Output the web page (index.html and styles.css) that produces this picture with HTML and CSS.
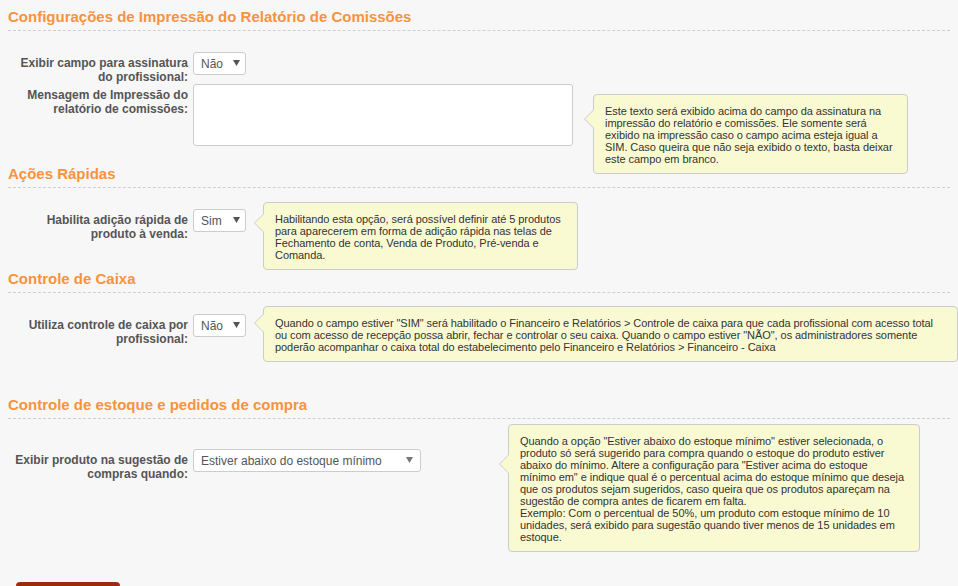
FILE: index.html
```html
<!DOCTYPE html>
<html lang="pt-BR">
<head>
<meta charset="utf-8">
<title>Configurações</title>
<link rel="stylesheet" href="styles.css">
</head>
<body>
<div class="page">

  <h2 class="section-title">Configurações de Impressão do Relatório de Comissões</h2>
  <div class="form-row">
    <label class="form-label">Exibir campo para assinatura do profissional:</label>
    <span class="select-wrap select-wrap--sm">
      <select class="select"><option>Não</option><option>Sim</option></select>
      <svg class="caret" width="7" height="6" viewBox="0 0 7 6"><path d="M0 0H7L3.5 6Z"/></svg>
    </span>
  </div>
  <div class="form-row">
    <label class="form-label">Mensagem de Impressão do relatório de comissões:</label>
    <textarea class="textarea"></textarea>
    <div class="hint hint--print">Este texto será exibido acima do campo da assinatura na impressão do relatório e comissões. Ele somente será exibido na impressão caso o campo acima esteja igual a SIM. Caso queira que não seja exibido o texto, basta deixar este campo em branco.</div>
  </div>

  <h2 class="section-title section-title--after-area">Ações Rápidas</h2>
  <div class="form-row">
    <label class="form-label">Habilita adição rápida de produto à venda:</label>
    <span class="select-wrap select-wrap--sm">
      <select class="select"><option>Sim</option><option>Não</option></select>
      <svg class="caret" width="7" height="6" viewBox="0 0 7 6"><path d="M0 0H7L3.5 6Z"/></svg>
    </span>
    <div class="hint hint--quick">Habilitando esta opção, será possível definir até 5 produtos para aparecerem em forma de adição rápida nas telas de Fechamento de conta, Venda de Produto, Pré-venda e Comanda.</div>
  </div>

  <h2 class="section-title section-title--cash">Controle de Caixa</h2>
  <div class="form-row">
    <label class="form-label">Utiliza controle de caixa por profissional:</label>
    <span class="select-wrap select-wrap--sm">
      <select class="select"><option>Não</option><option>Sim</option></select>
      <svg class="caret" width="7" height="6" viewBox="0 0 7 6"><path d="M0 0H7L3.5 6Z"/></svg>
    </span>
    <div class="hint hint--cash">Quando o campo estiver "SIM" será habilitado o Financeiro e Relatórios &gt; Controle de caixa para que cada profissional com acesso total ou com acesso de recepção possa abrir, fechar e controlar o seu caixa. Quando o campo estiver "NÃO", os administradores somente poderão acompanhar o caixa total do estabelecimento pelo Financeiro e Relatórios &gt; Financeiro - Caixa</div>
  </div>

  <h2 class="section-title section-title--stock">Controle de estoque e pedidos de compra</h2>
  <div class="form-row">
    <label class="form-label">Exibir produto na sugestão de compras quando:</label>
    <span class="select-wrap select-wrap--lg">
      <select class="select"><option>Estiver abaixo do estoque mínimo</option><option>Estiver acima do estoque mínimo em</option></select>
      <svg class="caret" width="7" height="6" viewBox="0 0 7 6"><path d="M0 0H7L3.5 6Z"/></svg>
    </span>
    <div class="hint hint--stock">Quando a opção "Estiver abaixo do estoque mínimo" estiver selecionada, o produto só será sugerido para compra quando o estoque do produto estiver abaixo do mínimo. Altere a configuração para "Estiver acima do estoque<br>mínimo em" e indique qual é o percentual acima do estoque mínimo que deseja que os produtos sejam sugeridos, caso queira que os produtos apareçam na sugestão de compra antes de ficarem em falta.<br>Exemplo: Com o percentual de 50%, um produto com estoque mínimo de 10 unidades, será exibido para sugestão quando tiver menos de 15 unidades em estoque.</div>
  </div>

  <button class="btn-save" type="button">Salvar</button>
</div>
</body>
</html>
```

FILE: styles.css
```css
* { box-sizing: border-box; }

html, body {
  margin: 0;
  padding: 0;
  background: #f7f7f7;
  font-family: Arial, "Liberation Sans", Helvetica, sans-serif;
  color: #333;
}

.page {
  padding: 8px 8px 20px;
}

.section-title {
  margin: 0 0 21px;
  padding: 0 0 4px;
  font-size: 15px;
  line-height: 18px;
  font-weight: bold;
  color: #f7933f;
  border-bottom: 1px dashed #cfcfcf;
}

.section-title--after-area { margin-top: 19px; }
.section-title--cash { margin-top: 29px; }
.section-title--stock { margin-top: 50px; margin-bottom: 30px; }

.form-row {
  position: relative;
  display: flex;
  align-items: flex-start;
}

.form-label {
  width: 180px;
  flex: none;
  padding-top: 4px;
  margin-right: 5px;
  text-align: right;
  font-size: 12px;
  line-height: 14px;
  font-weight: bold;
  color: #555;
}

.select-wrap {
  position: relative;
  display: inline-block;
  flex: none;
}

.select-wrap--sm { width: 53px; }
.select-wrap--lg { width: 228px; }

.select {
  display: block;
  width: 100%;
  height: 23px;
  margin: 0;
  padding: 0 18px 0 7px;
  -webkit-appearance: none;
  appearance: none;
  background: #fff;
  border: 1px solid #ccc;
  border-radius: 3px;
  font-family: Arial, "Liberation Sans", sans-serif;
  font-size: 12px;
  color: #555;
  outline: none;
}

.caret {
  position: absolute;
  right: 6px;
  top: 8px;
  fill: #555;
  pointer-events: none;
}

.select-wrap--lg .caret {
  right: 8px;
  fill: #777;
}

.textarea {
  display: block;
  flex: none;
  width: 380px;
  height: 62px;
  margin: 0;
  padding: 4px 6px;
  background: #fff;
  border: 1px solid #ccc;
  border-radius: 3px;
  resize: none;
  font-family: Arial, "Liberation Sans", sans-serif;
  font-size: 12px;
}

.hint {
  position: absolute;
  padding: 10px 10px 8px 11px;
  background: #fafad2;
  border: 1px solid #ccc;
  border-radius: 4px;
  font-size: 11px;
  line-height: 12px;
  letter-spacing: -0.06px;
  color: #333;
}

.hint::before,
.hint::after {
  content: "";
  position: absolute;
  width: 0;
  height: 0;
  border-style: solid;
  border-color: transparent;
}

.hint::before {
  left: -10px;
  top: var(--arrow-top);
  border-width: 10px 10px 10px 0;
  border-right-color: #ccc;
}

.hint::after {
  left: -9px;
  top: var(--arrow-top);
  margin-top: 1px;
  border-width: 9px 9px 9px 0;
  border-right-color: #fafad2;
}

.hint--print { left: 585px; top: 10px; width: 315px; --arrow-top: 14px; }
.hint--quick { left: 255px; top: -7px; width: 315px; --arrow-top: 10px; }
.hint--cash  { left: 255px; top: -8px; width: 695px; --arrow-top: 6px; padding-right: 16px; }
.hint--stock { left: 500px; top: -25px; width: 412px; --arrow-top: 29px; padding-right: 6px; }

.btn-save {
  display: block;
  margin: 101px 0 0 8px;
  width: 104px;
  height: 34px;
  padding-top: 16px;
  border: none;
  border-radius: 4px;
  background: #9b2a0f;
  color: #fff;
  font-family: Arial, "Liberation Sans", sans-serif;
  font-size: 13px;
  font-weight: bold;
}
```
